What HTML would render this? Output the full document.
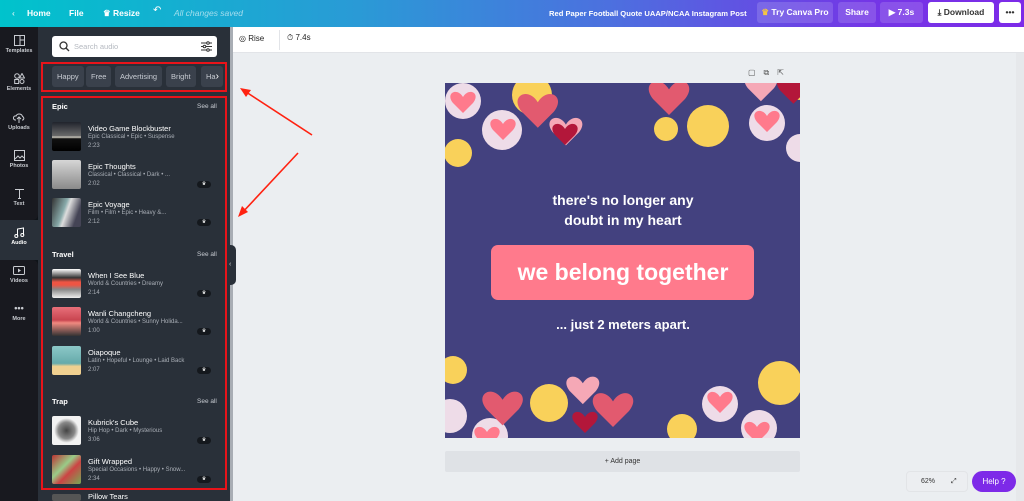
<!DOCTYPE html>
<html><head><meta charset="utf-8"><style>
*{margin:0;padding:0;box-sizing:border-box}
html,body{width:1024px;height:501px;overflow:hidden}
body{font-family:"Liberation Sans",sans-serif;background:#ebeef1;position:relative}
.a{position:absolute}
.top{left:0;top:0;width:1024px;height:27px;background:linear-gradient(90deg,#00c3cc 0%,#2a9ad6 35%,#4d6fdf 60%,#7436e6 85%,#7d2ae8 100%);color:#fff;font-size:8.5px;font-weight:bold}
.top span{position:absolute;top:8px}
.btn{position:absolute;top:2px;height:21px;border-radius:3px;background:rgba(255,255,255,.15);color:#fff;font-size:8.5px;font-weight:bold;line-height:21px;text-align:center}
.rail{left:0;top:27px;width:38px;height:474px;background:#0e1318}
.ri{position:absolute;left:0;width:38px;text-align:center;color:#c9ccd1;font-size:5.5px;font-weight:bold}
.ri svg{display:block;margin:0 auto 2px}
.panel{left:38px;top:27px;width:192px;height:474px;background:#293039}
.chip{position:absolute;top:66px;height:21px;background:#3a414c;border-radius:3px;color:#c7cbd2;font-size:7.5px;line-height:21px;padding:0 5px}
.h{position:absolute;left:52px;color:#fff;font-size:7.5px;font-weight:bold}
.sa{position:absolute;left:197px;color:#c7cbd2;font-size:6.5px}
.th{position:absolute;left:52px;width:29px;height:29px;border-radius:2px}
.t1{position:absolute;left:88px;color:#fff;font-size:7.5px}
.t2{position:absolute;left:88px;color:#a9aeb6;font-size:6px;white-space:nowrap}
.cr{position:absolute;left:197px;width:14px;height:7px;border-radius:4px;background:#14181d;color:#fff;font-size:5px;text-align:center;line-height:7px}
.rb{position:absolute;border:2px solid #e8141a}
</style></head><body>
<div class="a top">
<span style="left:12px;font-weight:normal">&#8249;</span><span style="left:27px">Home</span><span style="left:69px">File</span><span style="left:103px">♛ Resize</span><span style="left:153px;font-weight:normal;font-size:10px;top:5px">↶</span><span style="left:174px;font-style:italic;font-weight:normal;opacity:.6">All changes saved</span>
<span style="left:549px;font-size:7.6px;top:9px">Red Paper Football Quote UAAP/NCAA Instagram Post</span>
<div class="btn" style="left:757px;width:76px"><span style="color:#f5c542;position:static">♛</span> Try Canva Pro</div>
<div class="btn" style="left:838px;width:38px">Share</div>
<div class="btn" style="left:880px;width:43px">▶ 7.3s</div>
<div class="btn" style="left:928px;width:66px;background:#fff;color:#333">⤓ Download</div>
<div class="btn" style="left:999px;width:22px;background:#fff;color:#333">•••</div>
</div>
<div class="a rail">
<div class="a" style="left:0;top:0;width:38px;height:193px;background:#18191f;border-bottom-right-radius:5px"></div>
<div class="a" style="left:0;top:193px;width:38px;height:40px;background:#293039"></div>
<div class="a" style="left:0;top:233px;width:38px;height:241px;background:#18191f;border-top-right-radius:5px"></div>
<div class="ri" style="top:8px"><svg width="11" height="11"><rect x=".5" y=".5" width="10" height="10" fill="none" stroke="#c9ccd1"/><path d="M6 1V10M6 5H10" stroke="#c9ccd1"/></svg>Templates</div>
<div class="ri" style="top:46px"><svg width="11" height="11"><circle cx="3" cy="3" r="2.3" fill="none" stroke="#c9ccd1"/><path d="M8 .5L10.5 5H5.5Z" fill="none" stroke="#c9ccd1"/><rect x=".7" y="6.5" width="4" height="4" fill="none" stroke="#c9ccd1"/><circle cx="8" cy="8.5" r="2" fill="none" stroke="#c9ccd1"/></svg>Elements</div>
<div class="ri" style="top:85px"><svg width="12" height="11"><path d="M3 8H2A2 2 0 0 1 3 4A3.5 3.5 0 0 1 9.5 4.5A2 2 0 0 1 10 8H9M6 5V11M4 7L6 5L8 7" fill="none" stroke="#c9ccd1"/></svg>Uploads</div>
<div class="ri" style="top:123px"><svg width="11" height="11"><rect x=".5" y=".5" width="10" height="10" fill="none" stroke="#c9ccd1"/><path d="M1 9L4 6L6 8L8 6L10 8" fill="none" stroke="#c9ccd1"/></svg>Photos</div>
<div class="ri" style="top:161px"><svg width="11" height="11"><path d="M1 1.5H10M5.5 1.5V10.5M4 10.5H7" stroke="#c9ccd1"/></svg>Text</div>
<div class="ri" style="top:200px;color:#fff"><svg width="11" height="11"><path d="M3.5 9V2L9.5 1V8" fill="none" stroke="#fff"/><circle cx="2.3" cy="9" r="1.5" fill="none" stroke="#fff"/><circle cx="8.3" cy="8" r="1.5" fill="none" stroke="#fff"/></svg>Audio</div>
<div class="ri" style="top:238px"><svg width="12" height="11"><rect x=".5" y="1.5" width="11" height="8" rx="1" fill="none" stroke="#c9ccd1"/><path d="M5 3.5L8 5.5L5 7.5Z" fill="#c9ccd1"/></svg>Videos</div>
<div class="ri" style="top:278px;font-size:9px;line-height:6px">•••<div style="font-size:5.5px;margin-top:5px">More</div></div>
</div>
<div class="a panel"></div>
<div class="a" style="left:52px;top:36px;width:165px;height:21px;background:#fff;border-radius:3px"></div>
<svg class="a" style="left:59px;top:41px" width="11" height="11"><circle cx="4.5" cy="4.5" r="3.5" fill="none" stroke="#333" stroke-width="1.3"/><path d="M7 7L10 10" stroke="#333" stroke-width="1.3"/></svg>
<div class="a" style="left:74px;top:42px;font-size:7.5px;color:#b5b9c0">Search audio</div>
<svg class="a" style="left:201px;top:41px" width="11" height="11"><path d="M0 2H11M0 5.5H11M0 9H11" stroke="#333"/><circle cx="7" cy="2" r="1.3" fill="#fff" stroke="#333"/><circle cx="3.5" cy="5.5" r="1.3" fill="#fff" stroke="#333"/><circle cx="7" cy="9" r="1.3" fill="#fff" stroke="#333"/></svg>
<div class="chip" style="left:52px">Happy</div>
<div class="chip" style="left:86px">Free</div>
<div class="chip" style="left:115px">Advertising</div>
<div class="chip" style="left:166px">Bright</div>
<div class="chip" style="left:201px;width:22px;overflow:hidden">Ha<span style="color:#fff;font-size:10px">›</span></div>
<div class="rb" style="left:41px;top:62px;width:186px;height:30px"></div>
<div class="rb" style="left:41px;top:96px;width:186px;height:394px"></div>

<div class="h" style="top:102px">Epic</div><div class="sa" style="top:103px">See all</div>
<div class="th" style="top:122px;background:linear-gradient(#20232c 0%,#6a6a6a 48%,#d8d4c8 52%,#111 58%,#000)"></div>
<div class="t1" style="top:124px">Video Game Blockbuster</div><div class="t2" style="top:134px">Epic Classical • Epic • Suspense</div><div class="t2" style="top:143px">2:23</div>
<div class="th" style="top:160px;background:linear-gradient(#d6d6d6,#8a8a8a)"></div>
<div class="t1" style="top:162px">Epic Thoughts</div><div class="t2" style="top:172px">Classical • Classical • Dark • ...</div><div class="t2" style="top:181px">2:02</div><div class="cr" style="top:181px">♛</div>
<div class="th" style="top:198px;background:linear-gradient(110deg,#333 0%,#8aa 40%,#ddd 50%,#445 80%)"></div>
<div class="t1" style="top:200px">Epic Voyage</div><div class="t2" style="top:210px">Film • Film • Epic • Heavy &amp;...</div><div class="t2" style="top:219px">2:12</div><div class="cr" style="top:219px">♛</div>

<div class="h" style="top:250px">Travel</div><div class="sa" style="top:251px">See all</div>
<div class="th" style="top:269px;background:linear-gradient(#fff 0%,#333 30%,#e54 45%,#e54 55%,#888 70%,#eee)"></div>
<div class="t1" style="top:271px">When I See Blue</div><div class="t2" style="top:281px">World &amp; Countries • Dreamy</div><div class="t2" style="top:290px">2:14</div><div class="cr" style="top:290px">♛</div>
<div class="th" style="top:307px;background:linear-gradient(#e8707a,#c94550 45%,#f08a80 55%,#333)"></div>
<div class="t1" style="top:309px">Wanli Changcheng</div><div class="t2" style="top:319px">World &amp; Countries • Sunny Holida...</div><div class="t2" style="top:328px">1:00</div><div class="cr" style="top:328px">♛</div>
<div class="th" style="top:346px;background:linear-gradient(#8cc8c8 0%,#6aa 60%,#f0d090 70%)"></div>
<div class="t1" style="top:348px">Oiapoque</div><div class="t2" style="top:358px">Latin • Hopeful • Lounge • Laid Back</div><div class="t2" style="top:367px">2:07</div><div class="cr" style="top:367px">♛</div>

<div class="h" style="top:397px">Trap</div><div class="sa" style="top:398px">See all</div>
<div class="th" style="top:416px;background:radial-gradient(#444 0%,#888 40%,#f2f2f2 60%)"></div>
<div class="t1" style="top:418px">Kubrick's Cube</div><div class="t2" style="top:428px">Hip Hop • Dark • Mysterious</div><div class="t2" style="top:437px">3:06</div><div class="cr" style="top:437px">♛</div>
<div class="th" style="top:455px;background:linear-gradient(135deg,#b33 0%,#9c8 40%,#c44 60%,#7a5)"></div>
<div class="t1" style="top:457px">Gift Wrapped</div><div class="t2" style="top:467px">Special Occasions • Happy • Snow...</div><div class="t2" style="top:476px">2:34</div><div class="cr" style="top:476px">♛</div>
<div class="th" style="top:494px;height:7px;background:#555"></div><div class="t1" style="top:492px">Pillow Tears</div>

<div class="a" style="left:230px;top:27px;width:3px;height:474px;background:#a8adb4"></div>
<div class="a" style="left:229px;top:245px;width:7px;height:40px;background:#293039;border-radius:0 5px 5px 0;color:#ccc;font-size:7px;line-height:40px">‹</div>
<div class="a" style="left:233px;top:27px;width:791px;height:26px;background:#fff;border-bottom:1px solid #e2e4e8"></div>
<div class="a" style="left:239px;top:34px;font-size:8px;color:#222">◎ Rise</div>
<div class="a" style="left:279px;top:30px;width:1px;height:20px;background:#e2e4e8"></div>
<div class="a" style="left:287px;top:33px;font-size:8px;color:#222">⏱ 7.4s</div>
<div class="a" style="left:748px;top:68px;font-size:8px;color:#555;letter-spacing:8px">▢⧉⇱</div>
<div class="a" style="left:1016px;top:53px;width:8px;height:448px;background:#e6e8eb"></div>

<svg class="a" style="left:233px;top:80px" width="90" height="145"><path d="M79 55L10 10" stroke="#f21" stroke-width="1.6"/><path d="M7 8L18 10L13 17Z" fill="#f21"/><path d="M65 73L8 134" stroke="#f21" stroke-width="1.6"/><path d="M5 137L9 126L15 132Z" fill="#f21"/></svg>

<svg class="a" style="left:445px;top:83px" width="355" height="355" viewBox="0 0 355 355">
<defs><path id="hrt" d="M0 6C-6-4-18 2-10 12L0 22L10 12C18 2 6-4 0 6Z"/></defs>
<rect width="355" height="355" fill="#43417f"/>
<g fill="#eedce8"><circle cx="18" cy="18" r="18"/><circle cx="57" cy="47" r="20"/><circle cx="322" cy="40" r="18"/><circle cx="355" cy="65" r="14"/><circle cx="275" cy="321" r="18"/><circle cx="314" cy="345" r="18"/><circle cx="5" cy="333" r="17"/><circle cx="45" cy="353" r="18"/></g>
<g fill="#ff7a8c"><use href="#hrt" x="18" y="8"/><use href="#hrt" x="58" y="35"/><use href="#hrt" x="322" y="27"/><use href="#hrt" x="275" y="308"/><use href="#hrt" x="312" y="338"/><use href="#hrt" x="42" y="343"/></g>
<g fill="#f9d15a"><circle cx="87" cy="12" r="20"/><circle cx="221" cy="46" r="12"/><circle cx="263" cy="43" r="21"/><circle cx="13" cy="70" r="14"/><circle cx="8" cy="287" r="14"/><circle cx="104" cy="320" r="19"/><circle cx="237" cy="346" r="15"/><circle cx="335" cy="300" r="22"/><circle cx="355" cy="5" r="12"/></g>
<g fill="#e25a6f" transform="scale(1.6)"><use href="#hrt" x="58" y="6"/><use href="#hrt" x="36" y="192"/><use href="#hrt" x="105" y="193"/><use href="#hrt" x="140" y="-2"/></g>
<g transform="scale(1.3)"><use href="#hrt" x="93" y="26" fill="#f5a8b6"/><use href="#hrt" x="106" y="225" fill="#f5a8b6"/><use href="#hrt" x="243" y="-8" fill="#f5a8b6"/><use href="#hrt" x="268" y="-6" fill="#b3173a"/></g>
<g fill="#b3173a"><use href="#hrt" x="120" y="40"/><use href="#hrt" x="140" y="328"/></g>
<g font-family="Liberation Sans,sans-serif" font-weight="bold" fill="#fff" text-anchor="middle">
<text x="178" y="122" font-size="14">there's no longer any</text>
<text x="178" y="142" font-size="14">doubt in my heart</text>
<rect x="46" y="162" width="263" height="55" rx="7" fill="#ff7a8c"/>
<text x="178" y="197" font-size="23">we belong together</text>
<text x="178" y="246" font-size="13">... just 2 meters apart.</text></g>
</svg>
<div class="a" style="left:445px;top:451px;width:355px;height:21px;background:#dfe2e6;border-radius:2px;font-size:7px;color:#333;text-align:center;line-height:21px">+ Add page</div>
<div class="a" style="left:906px;top:471px;width:62px;height:21px;background:#eceef1;border:1px solid #e2e4e7;border-radius:4px;font-size:7px;color:#333;line-height:19px;padding-left:14px">62% <span style="margin-left:14px">⤢</span></div>
<div class="a" style="left:972px;top:471px;width:44px;height:21px;background:#7d2ae8;border-radius:11px;color:#fff;font-size:8px;line-height:21px;text-align:center">Help ?</div>
</body></html>
